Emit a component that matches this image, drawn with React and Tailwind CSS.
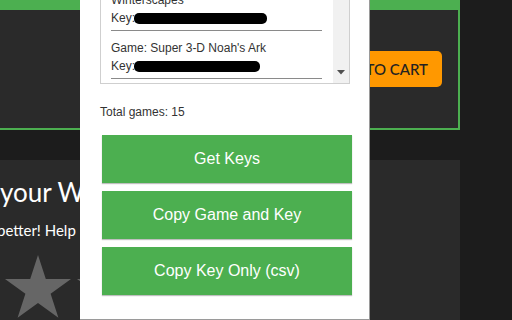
import React from "react";

const games = [
  { lines: ["Winterscapes"], key: 133 },
  { lines: ["Game: Super 3-D Noah's Ark"], key: 126 },
];

const Star = () => (
  <svg width="66" height="64" viewBox="0 0 66 64">
    <polygon
      points="33,0 40.8,24 66,24 45.6,38.8 53.4,62.8 33,48 12.6,62.8 20.4,38.8 0,24 25.2,24"
      fill="#666666"
    />
  </svg>
);

const Popup = () => (
  <div
    className="absolute left-[80px] top-0 w-[290px] h-[320px] bg-white border-r border-b border-[#9a9a9a] px-[20px]"
    style={{ fontFamily: '"Liberation Sans", Arial, sans-serif' }}
  >
    {/* game list, scrolled down */}
    <div className="flex h-[84px] w-[250px] border border-t-0 border-[#cfcfcf] overflow-hidden">
      <div className="flex-1 pl-[10px] pr-[11px] -mt-[9px] text-[12px] leading-[18px] text-[#333]">
        {games.map((g, i) => (
          <div key={i} className={`border-b border-[#8a8a8a] pb-[3px] ${i ? "pt-[8px]" : ""}`}>
            {g.lines.map((l) => (
              <div key={l} className="whitespace-nowrap">{l}</div>
            ))}
            <div className="flex items-center">
              <span>Key:</span>
              <span
                className="inline-block h-[11px] bg-black rounded-[5px] -ml-[1px]"
                style={{ width: g.key }}
              />
            </div>
          </div>
        ))}
      </div>
      <div className="w-[16px] bg-[#f1f1f1] flex flex-col justify-end items-center pb-[8px]">
        <svg width="8" height="5" viewBox="0 0 8 5">
          <polygon points="0,0 8,0 4,4.5" fill="#505050" />
        </svg>
      </div>
    </div>

    <div className="mt-[21px] text-[12px] leading-[14px] text-[#333]">Total games: 15</div>

    <div className="mt-[16px] ml-[2px] flex flex-col gap-[8px]">
      {["Get Keys", "Copy Game and Key", "Copy Key Only (csv)"].map((t) => (
        <button
          key={t}
          className="w-[250px] h-[48px] bg-[#4caf50] text-white text-[16px] shadow-[0_1px_1px_rgba(0,0,0,0.25)]"
        >
          {t}
        </button>
      ))}
    </div>
  </div>
);

export default function App() {
  return (
    <div
      className="relative w-[512px] h-[320px] overflow-hidden bg-[#1c1c1c]"
      style={{ fontFamily: 'Lato, "Open Sans", sans-serif' }}
    >
      <div className="w-[460px]">
        <div className="h-[130px] bg-[#2a2a2a] border-t-[10px] border-r-2 border-b-2 border-[#4caf50] flex items-center justify-end pr-[16px]">
          <button className="h-[36px] px-[14px] rounded-[5px] bg-[#ff9800] text-[#222] text-[15px] font-medium">
            ADD TO CART
          </button>
        </div>
        <div className="h-[30px]" />
        <div className="h-[160px] bg-[#2a2a2a] pt-[16px]">
          <div className="text-[26px] leading-[32px] text-white whitespace-nowrap">your Wint</div>
          <div className="mt-[13px] -ml-[3px] text-[15px] leading-[18px] text-white whitespace-nowrap">
            better! Help
          </div>
          <div className="mt-[16px] ml-[5px] flex gap-[6px]">
            <Star />
            <Star />
          </div>
        </div>
      </div>
      <Popup />
    </div>
  );
}
